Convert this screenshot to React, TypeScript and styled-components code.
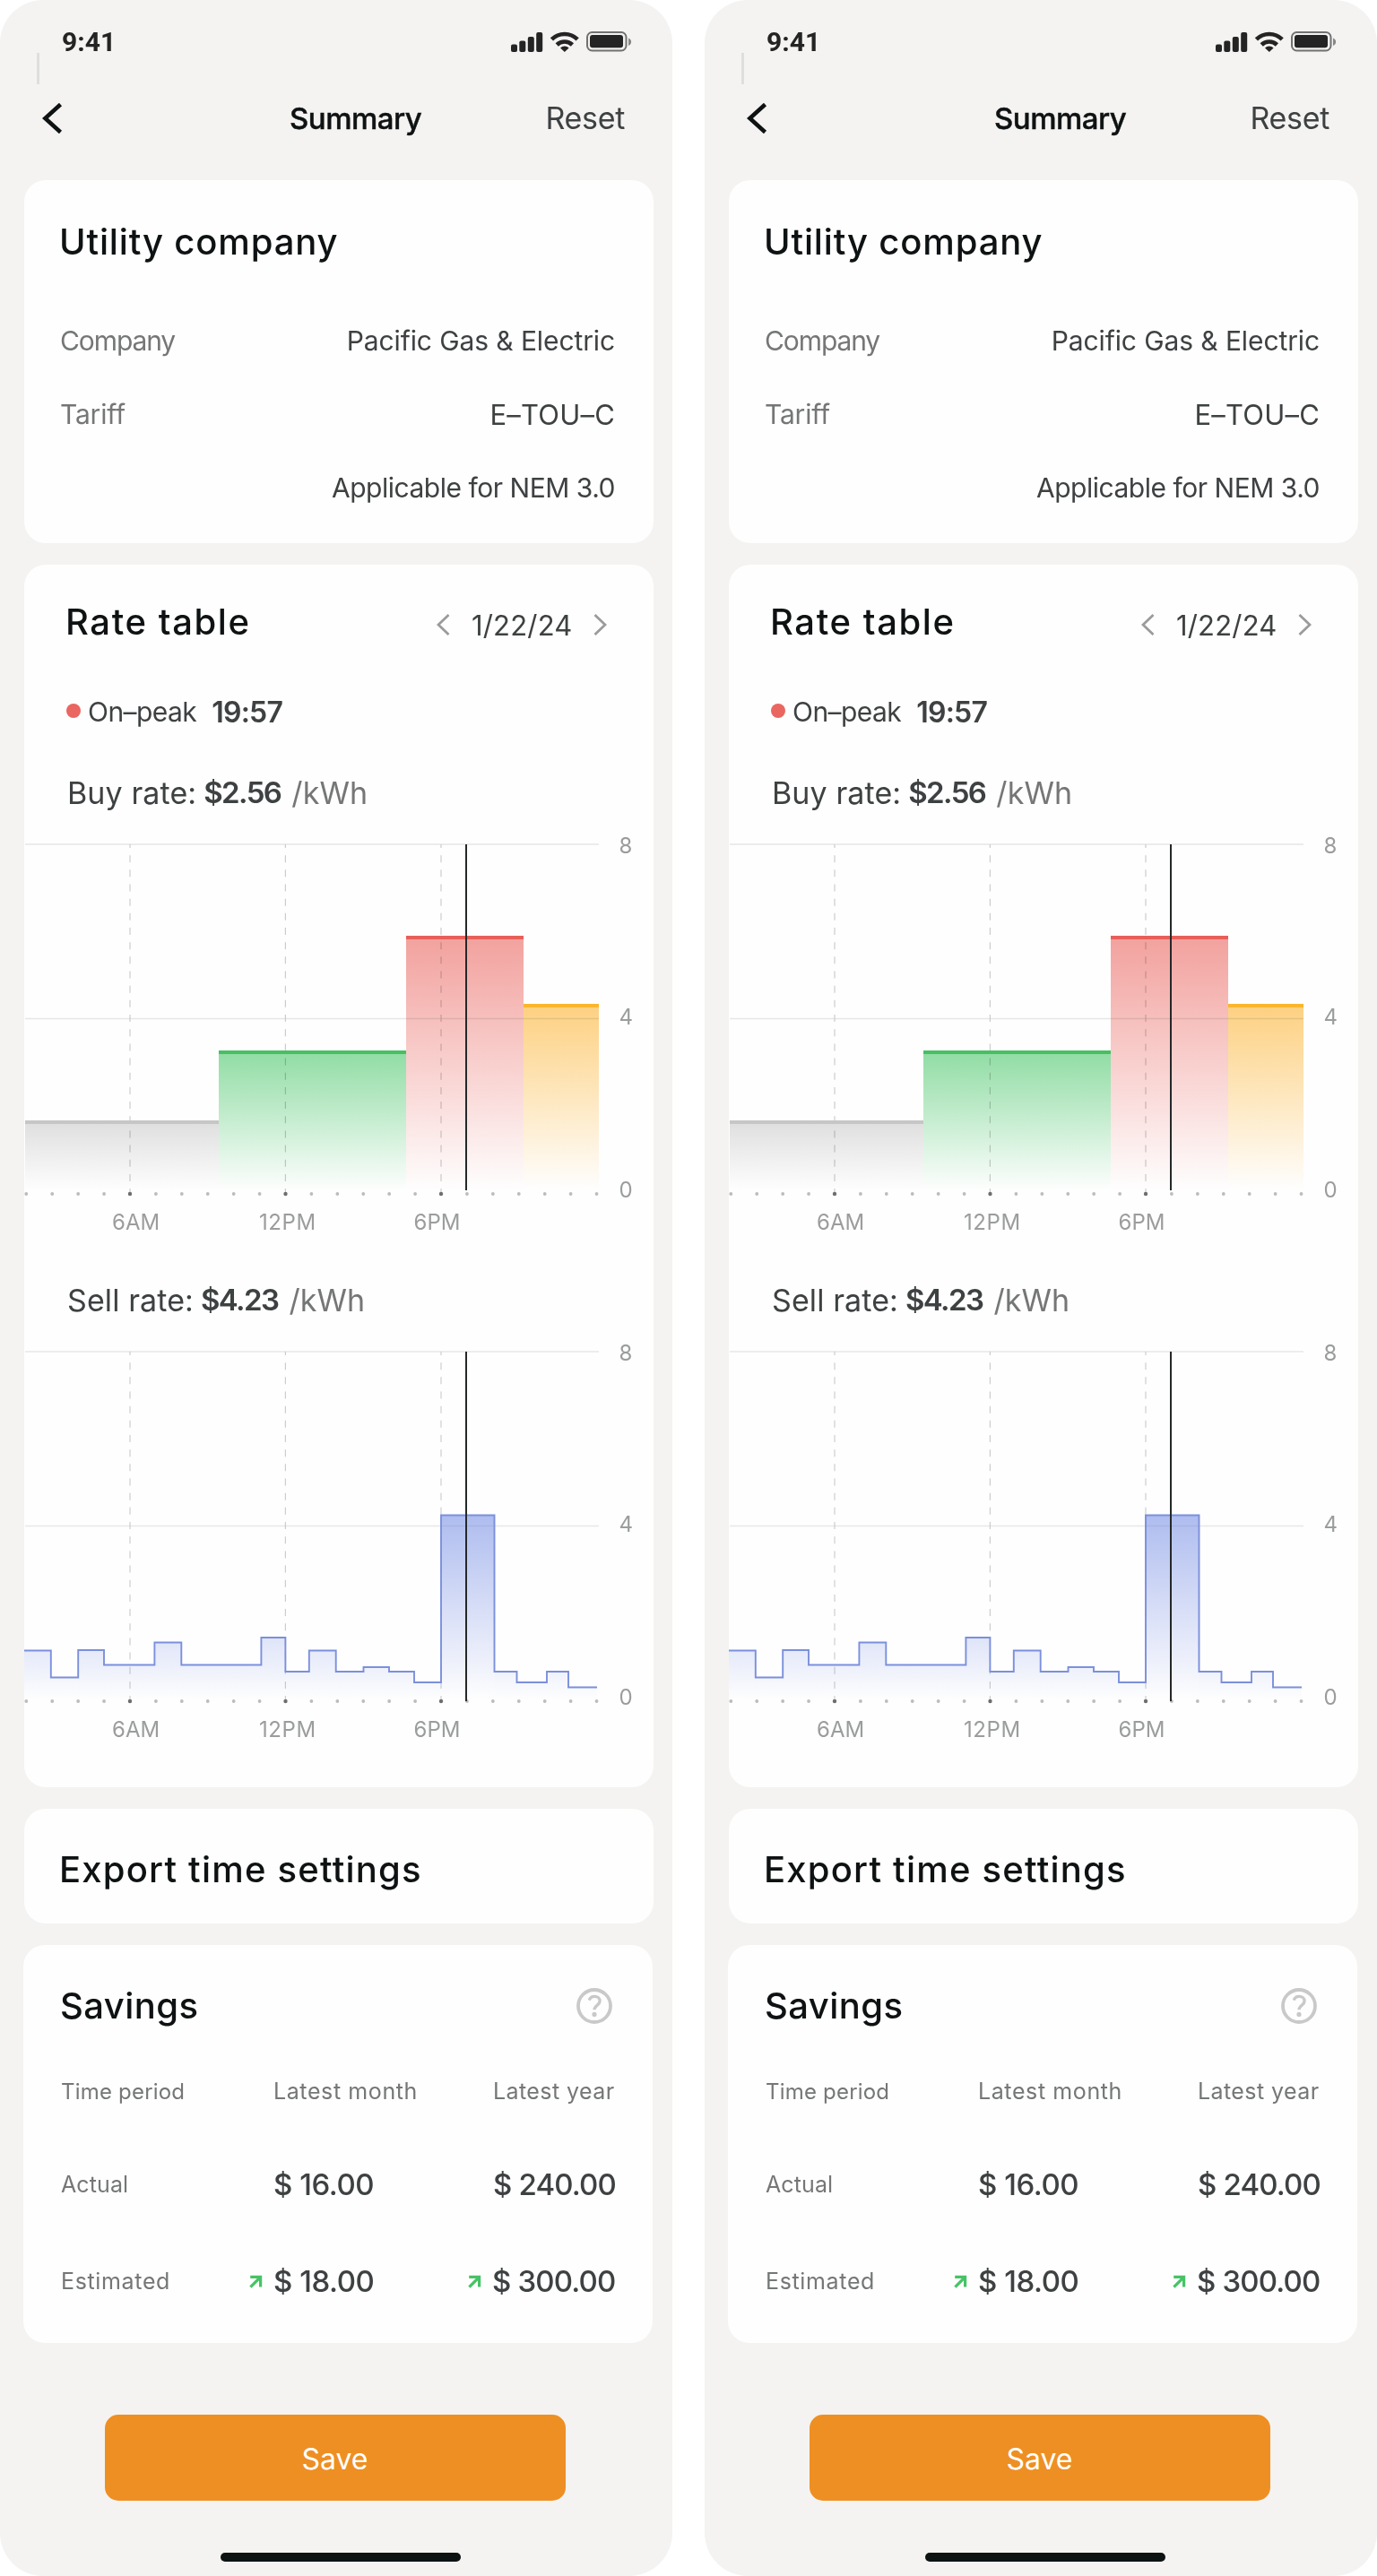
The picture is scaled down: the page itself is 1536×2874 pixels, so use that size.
import React from "react";
import styled, { createGlobalStyle } from "styled-components";

const GlobalStyle = createGlobalStyle`
  *, *::before, *::after { box-sizing: border-box; }
  body {
    margin: 0;
    background: #ffffff;
    font-family: Inter, "Liberation Sans", sans-serif;
    color: #3e4142;
  }
`;

const Board = styled.main`
  display: flex;
  justify-content: space-between;
  width: 1536px;
  height: 2874px;
`;

const Phone = styled.section`
  position: relative;
  display: flex;
  flex-direction: column;
  width: 750px;
  height: 2874px;
  border-radius: 48px;
  background: #f4f3f1;
  overflow: hidden;
`;

const StatusBar = styled.header`
  display: flex;
  align-items: center;
  justify-content: space-between;
  height: 93px;
  padding: 0 45px 0 69px;
`;

const Clock = styled.time`
  font: 700 30px/40px Roboto, sans-serif;
  color: #232423;
`;

const EdgeMark = styled.span`
  position: absolute;
  left: 41px;
  top: 59px;
  width: 2.5px;
  height: 35px;
  background: #dededc;
`;

const NavBar = styled.nav`
  display: grid;
  grid-template-columns: 276px 1fr auto;
  align-items: center;
  height: 77px;
  padding: 0 53px 0 47px;
  margin-bottom: 31px;
`;

const NavTitle = styled.h1`
  margin: 0;
  font-size: 33px;
  font-weight: 500;
  line-height: 40px;
  letter-spacing: -0.5px;
  color: #0e1213;
  -webkit-text-stroke: 0.4px #0e1213;
`;

const ResetLink = styled.span`
  font-size: 34px;
  line-height: 40px;
  letter-spacing: -0.3px;
`;

const Content = styled.div`
  display: flex;
  flex-direction: column;
  gap: 24px;
`;

const Card = styled.article<{ $height: number; $x?: number }>`
  width: 702px;
  height: ${(p) => p.$height}px;
  margin-left: ${(p) => p.$x ?? 27}px;
  border-radius: 24px;
  background: #fefefe;
  overflow: hidden;
`;

const CardTitle = styled.h2<{ $spacing: number }>`
  margin: 0;
  font-size: 40px;
  font-weight: 500;
  line-height: 46px;
  letter-spacing: ${(p) => p.$spacing}px;
  white-space: nowrap;
  color: #0e1213;
`;

const UtilityBody = styled.div`
  padding: 46px 43px 0 39px;
`;

const Details = styled.dl`
  margin: 46px 0 0;
`;

const DetailRow = styled.div`
  display: flex;
  align-items: center;
  justify-content: space-between;
  height: 82px;
  font-size: 30px;
`;

const DetailLabel = styled.dt<{ $spacing: number }>`
  letter-spacing: ${(p) => p.$spacing}px;
  padding-left: 1px;
  color: #757777;
`;

const DetailValue = styled.dd<{ $spacing: number; $size?: number }>`
  margin: 0;
  font-size: ${(p) => p.$size ?? 30}px;
  letter-spacing: ${(p) => p.$spacing}px;
`;

const RateHeader = styled.div`
  display: flex;
  align-items: center;
  justify-content: space-between;
  height: 70px;
  margin-top: 29px;
  padding: 0 52px 0 46px;
`;

const DatePicker = styled.div`
  display: flex;
  align-items: center;
  gap: 23.5px;
  margin-top: 6px;
  font-size: 31px;
  letter-spacing: 0.2px;
`;

const PeakRow = styled.div`
  display: flex;
  align-items: center;
  height: 60px;
  margin: 35px 0 0 47px;
  font-size: 30px;
  letter-spacing: -0.55px;
`;

const PeakDot = styled.i`
  width: 16px;
  height: 16px;
  margin: 0 8px 3px 0;
  border-radius: 50%;
  background: #e96661;
`;

const PeakTime = styled.strong`
  margin-left: 17px;
  font-size: 32px;
  font-weight: 600;
  letter-spacing: -0.8px;
`;

const RateLine = styled.p<{ $top: number }>`
  display: flex;
  align-items: center;
  height: 50px;
  margin: ${(p) => p.$top}px 0 21px 48px;
  font-size: 34px;
  letter-spacing: 0.1px;
  white-space: nowrap;
`;

const RateValue = styled.strong`
  margin: 0 12px 0 8px;
  font-size: 33px;
  font-weight: 600;
  letter-spacing: -1.6px;
`;

const RateUnit = styled.span`
  color: #757777;
`;

const ChartSvg = styled.svg`
  display: block;
  width: 702px;
  height: 450px;
`;

const AxisText = styled.text`
  font-family: Inter, "Liberation Sans", sans-serif;
  font-size: 24px;
  fill: #9b9d9d;
`;

const ExportBody = styled.div`
  display: flex;
  align-items: center;
  height: 100%;
  padding: 8px 39px 0;
`;

const SavingsHeader = styled.div`
  display: flex;
  align-items: center;
  justify-content: space-between;
  height: 50px;
  margin-top: 43px;
  padding: 0 45px 0 41px;
`;

const SavingsRow = styled.div<{ $top: number }>`
  display: grid;
  grid-template-columns: 210px 27px 217px 28px auto;
  align-items: center;
  height: 60px;
  margin-top: ${(p) => p.$top}px;
  padding-left: 42px;
  white-space: nowrap;
`;

const SmallLabel = styled.span<{ $spacing: number; $shift?: number; $size?: number }>`
  margin-left: ${(p) => p.$shift ?? 0}px;
  font-size: ${(p) => p.$size ?? 25}px;
  letter-spacing: ${(p) => p.$spacing}px;
  color: #757777;
`;

const Amount = styled.span<{ $spacing: number; $shift?: number }>`
  margin-left: ${(p) => p.$shift ?? 0}px;
  font-size: 33px;
  font-weight: 500;
  letter-spacing: ${(p) => p.$spacing}px;
`;

const SaveButton = styled.button`
  width: 514px;
  height: 96px;
  margin: 80px 0 0 116.5px;
  padding: 3px 0 0;
  border: 0;
  border-radius: 15px;
  background: #ee8f23;
  color: #ffffff;
  font-family: inherit;
  font-size: 32px;
  line-height: 40px;
`;

const HomeIndicator = styled.div`
  width: 268px;
  height: 10px;
  margin: 58px 0 0 246px;
  border-radius: 5px;
  background: #0d1213;
`;

const StatusIcons = () => (
  <svg width="135" height="24" viewBox="570 35 135 24" fill="#232423">
    <rect x="570" y="49.5" width="7" height="8.5" rx="2" />
    <rect x="579.3" y="45.5" width="7" height="12.5" rx="2" />
    <rect x="588.8" y="41" width="7" height="17" rx="2" />
    <rect x="598.2" y="36" width="7" height="22" rx="2" />
    <g fill="none" stroke="#232423" strokeWidth="4.6">
      <path d="M615.4 43.9a20.5 20.5 0 0 1 28.8 0" />
      <path d="M621.2 50a12.2 12.2 0 0 1 17.2 0" />
    </g>
    <path d="M625 53.4a7 7 0 0 1 9.6 0L629.8 58z" />
    <rect x="655" y="36" width="43.5" height="20.5" rx="5.5" fill="none" stroke="#707170" strokeWidth="2" />
    <rect x="658" y="39" width="37" height="14.3" rx="3" />
    <path d="M701 42.6c2 .8 3.1 2.2 3.1 4.2s-1.100 3.400-3.100 4.200z" fill="#868786" />
  </svg>
);

const BackIcon = () => (
  <svg width="23" height="34" viewBox="0 0 23 34" fill="none" stroke="#0e1213" strokeWidth="4.6">
    <path d="M20.500 1.500 3.400 17l17.100 15.500" />
  </svg>
);

const Chevron = ({ right = false }: { right?: boolean }) => (
  <svg width="15" height="24" viewBox="0 0 15 24" fill="none" stroke="#9a9c9c" strokeWidth="2.800">
    <path d={right ? "M1.500 1 13 12 1.500 23" : "M13.500 1 2 12l11.500 11"} />
  </svg>
);

const HelpIcon = () => (
  <svg width="40" height="40" viewBox="0 0 40 40" fill="none" stroke="#c9c9c9">
    <circle cx="20" cy="20" r="18" strokeWidth="3.800" />
    <path
      d="M14.200 13.600c1-2.600 3-4.200 5.900-4.200 3.400 0 6 2.100 6 5.100 0 4.600-6.100 5-6.100 9.800"
      strokeWidth="3.400"
    />
    <circle cx="20" cy="29.400" r="2.600" fill="#c9c9c9" stroke="none" />
  </svg>
);

const TrendUp = () => (
  <svg width="15" height="15" viewBox="0 0 15 15" fill="none" stroke="#46c366" strokeWidth="3.200">
    <path d="M1.200 2.400h11.400v11M12 3 1.400 13.600" />
  </svg>
);

const HOURS = Array.from({ length: 23 }, (_, i) => i);
const GUIDES = [145, 318.4, 492];

const Grid = () => (
  <g>
    <path d="M28 0H668M28 194.500H668" stroke="#e8e8e8" strokeWidth="1.600" />
    {GUIDES.map((x) => (
      <line
        key={x}
        x1={x}
        x2={x}
        y1="0"
        y2="388"
        stroke="#c4c4c4"
        strokeOpacity="0.850"
        strokeWidth="1.200"
        strokeDasharray="8 8.170"
        strokeDashoffset="4"
      />
    ))}
  </g>
);

const Axis = () => (
  <g>
    {HOURS.map((i) => {
      const major = i === 4 || i === 10 || i === 16;
      return <circle key={i} cx={29.300 + i * 28.920} cy="390" r={major ? 2.200 : 1.900} fill={major ? "#6d6f6f" : "#bcbcbc"} />;
    })}
    <AxisText x="690.500" y="10">8</AxisText>
    <AxisText x="690.500" y="200.500">4</AxisText>
    <AxisText x="690.500" y="394">0</AxisText>
    <AxisText x="125" y="430">6AM</AxisText>
    <AxisText x="289" y="430" letterSpacing="0.600">12PM</AxisText>
    <AxisText x="461.500" y="430">6PM</AxisText>
  </g>
);

const BARS = [
  { id: "off", x: 28, end: 244, top: 308, line: "#c6c6c6", fill: "#dedede" },
  { id: "mid", x: 244, end: 453, top: 230, line: "#46c062", fill: "#8fdca3" },
  { id: "peak", x: 453, end: 584, top: 102, line: "#e66059", fill: "#f2a19d" },
  { id: "part", x: 584, end: 668, top: 178, line: "#fbb62e", fill: "#fdd080" },
];

const BlendLayer = styled.g`
  mix-blend-mode: multiply;
`;

const BuyChart = ({ id }: { id: string }) => (
  <ChartSvg viewBox="27 -12 702 450">
    <defs>
      {BARS.map((b) => (
        <linearGradient key={b.id} id={`${id}-${b.id}`} x1="0" y1="0" x2="0" y2="1">
          <stop offset="0" stopColor={b.fill} />
          <stop offset="1" stopColor={b.fill} stopOpacity="0" />
        </linearGradient>
      ))}
    </defs>
    {BARS.map((b) => (
      <rect key={b.id} x={b.x} y={b.top} width={b.end - b.x} height={386 - b.top} fill={`url(#${id}-${b.id})`} />
    ))}
    <BlendLayer>
      <Grid />
    </BlendLayer>
    {BARS.map((b) => (
      <rect key={b.id} x={b.x} y={b.top} width={b.end - b.x} height="4" fill={b.line} />
    ))}
    <Axis />
    <line x1="520" x2="520" y1="0" y2="386" stroke="#252829" strokeWidth="2" />
  </ChartSvg>
);

const STEPS: [number, number][] = [
  [26, 333.500], [56.800, 363.500], [87.200, 333], [116, 349.500], [172.400, 324.500],
  [202.300, 349.500], [291.400, 319], [318.400, 357], [344.800, 333.500], [374.700, 357],
  [405.500, 352], [434, 357], [462, 369], [492, 182.500], [551.500, 357],
  [576.500, 369], [610, 357], [634, 374.500],
];
const STEP_PATH = STEPS.map(([x, y], i) => (i === 0 ? `M${x} ${y}` : `H${x}V${y}`)).join("") + "H666";

const SellChart = ({ id }: { id: string }) => (
  <ChartSvg viewBox="27 -12 702 450">
    <defs>
      <linearGradient id={`${id}-low`} gradientUnits="userSpaceOnUse" x1="0" y1="319" x2="0" y2="388">
        <stop offset="0" stopColor="#5f7be0" stopOpacity="0.200" />
        <stop offset="1" stopColor="#5f7be0" stopOpacity="0" />
      </linearGradient>
      <linearGradient id={`${id}-high`} gradientUnits="userSpaceOnUse" x1="0" y1="183" x2="0" y2="388">
        <stop offset="0" stopColor="#5f7be0" stopOpacity="0.500" />
        <stop offset="1" stopColor="#5f7be0" stopOpacity="0" />
      </linearGradient>
      <clipPath id={`${id}-around`}>
        <path d="M26 0H492V388H26ZM551.500 0H668V388H551.500Z" />
      </clipPath>
    </defs>
    <Grid />
    <path d={`${STEP_PATH}V388H26Z`} fill={`url(#${id}-low)`} clipPath={`url(#${id}-around)`} />
    <rect x="492" y="182.500" width="59.500" height="205.500" fill={`url(#${id}-high)`} />
    <path d={STEP_PATH} fill="none" stroke="#7b90dc" strokeWidth="1.900" />
    <Axis />
    <line x1="520" x2="520" y1="0" y2="390" stroke="#252829" strokeWidth="2" />
  </ChartSvg>
);

const SummaryScreen = ({ id }: { id: string }) => (
  <Phone>
    <StatusBar>
      <Clock>9:41</Clock>
      <StatusIcons />
    </StatusBar>
    <EdgeMark />
    <NavBar>
      <BackIcon />
      <NavTitle>Summary</NavTitle>
      <ResetLink>Reset</ResetLink>
    </NavBar>
    <Content>
      <Card $height={405}>
        <UtilityBody>
          <CardTitle $spacing={0.85}>Utility company</CardTitle>
          <Details>
            <DetailRow>
              <DetailLabel $spacing={-1.1}>Company</DetailLabel>
              <DetailValue $spacing={-0.1}>Pacific Gas &amp; Electric</DetailValue>
            </DetailRow>
            <DetailRow>
              <DetailLabel $spacing={-0.2}>Tariff</DetailLabel>
              <DetailValue $spacing={0.2} $size={31}>E–TOU–C</DetailValue>
            </DetailRow>
            <DetailRow>
              <DetailLabel $spacing={0} />
              <DetailValue $spacing={-0.48}>Applicable for NEM 3.0</DetailValue>
            </DetailRow>
          </Details>
        </UtilityBody>
      </Card>
      <Card $height={1364}>
        <RateHeader>
          <CardTitle $spacing={1.6}>Rate table</CardTitle>
          <DatePicker>
            <Chevron />
            <span>1/22/24</span>
            <Chevron right />
          </DatePicker>
        </RateHeader>
        <PeakRow>
          <PeakDot />
          <span>On–peak</span>
          <PeakTime>19:57</PeakTime>
        </PeakRow>
        <RateLine $top={35}>
          <span>Buy rate:</span>
          <RateValue>$2.56</RateValue>
          <RateUnit>/kWh</RateUnit>
        </RateLine>
        <BuyChart id={`${id}-buy`} />
        <RateLine $top={45}>
          <span>Sell rate:</span>
          <RateValue>$4.23</RateValue>
          <RateUnit>/kWh</RateUnit>
        </RateLine>
        <SellChart id={`${id}-sell`} />
      </Card>
      <Card $height={128}>
        <ExportBody>
          <CardTitle $spacing={1.2}>Export time settings</CardTitle>
        </ExportBody>
      </Card>
      <Card $height={444} $x={26}>
        <SavingsHeader>
          <CardTitle $spacing={0.45}>Savings</CardTitle>
          <HelpIcon />
        </SavingsHeader>
        <SavingsRow $top={40}>
          <SmallLabel $spacing={0.2} $size={24}>Time period</SmallLabel>
          <span />
          <SmallLabel $spacing={0.6}>Latest month</SmallLabel>
          <span />
          <SmallLabel $spacing={0.42}>Latest year</SmallLabel>
        </SavingsRow>
        <SavingsRow $top={44}>
          <SmallLabel $spacing={0.1}>Actual</SmallLabel>
          <span />
          <Amount $spacing={-0.45}>$ 16.00</Amount>
          <span />
          <Amount $spacing={-0.85}>$ 240.00</Amount>
        </SavingsRow>
        <SavingsRow $top={48}>
          <SmallLabel $spacing={0.65}>Estimated</SmallLabel>
          <TrendUp />
          <Amount $spacing={-0.45}>$ 18.00</Amount>
          <TrendUp />
          <Amount $spacing={-0.85} $shift={-1}>$ 300.00</Amount>
        </SavingsRow>
      </Card>
    </Content>
    <SaveButton type="button">Save</SaveButton>
    <HomeIndicator />
  </Phone>
);

export default function App() {
  return (
    <>
      <GlobalStyle />
      <Board>
        <SummaryScreen id="left" />
        <SummaryScreen id="right" />
      </Board>
    </>
  );
}
